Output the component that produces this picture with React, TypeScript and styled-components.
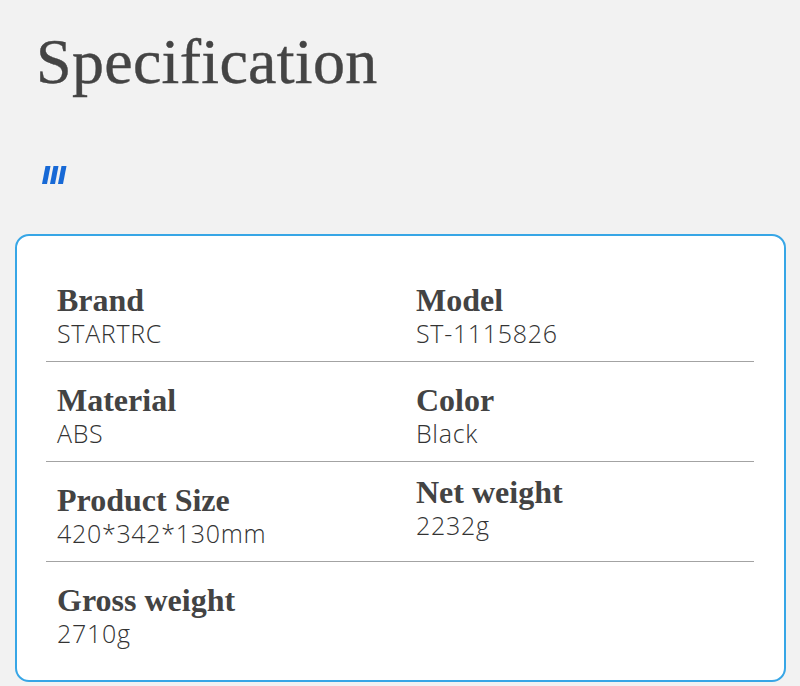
import React from "react";
import styled, { createGlobalStyle } from "styled-components";

const Global = createGlobalStyle`
  html, body { margin: 0; padding: 0; background: #f2f2f2; }
  body { width: 800px; min-height: 686px; overflow: hidden; }
`;

const Page = styled.div`
  width: 800px;
  height: 686px;
  background: #f2f2f2;
  padding-top: 30px;
  box-sizing: border-box;
`;

const Title = styled.h1`
  margin: 0 0 0 36px;
  font-family: "Liberation Serif", serif;
  font-weight: 400;
  font-size: 64px;
  line-height: 64px;
  color: #444444;
  letter-spacing: 0.3px;
  -webkit-text-stroke: 0.4px #444444;
`;

const Mark = styled.svg`
  display: block;
  margin: 72px 0 0 42px;
`;

const Card = styled.div`
  margin: 50px 14px 0 15px;
  height: 448px;
  box-sizing: border-box;
  background: #ffffff;
  border: 2px solid #37a6e6;
  border-radius: 14px;
  padding: 26px 30px 0 29px;
`;

const Row = styled.div<{ $last?: boolean }>`
  display: grid;
  grid-template-columns: 359px 1fr;
  padding-left: 11px;
  height: ${(p) => (p.$last ? "118px" : "99px")};
  border-bottom: ${(p) => (p.$last ? "none" : "1px solid #a3a3a3")};
`;

const Cell = styled.div<{ $raise?: number }>`
  padding-top: ${(p) => 23 - (p.$raise ?? 0)}px;
`;

const Label = styled.div`
  font-family: "Liberation Serif", serif;
  font-weight: 700;
  font-size: 32px;
  line-height: 30px;
  color: #434343;
`;

const Value = styled.div`
  margin-top: 3px;
  font-family: "Open Sans", sans-serif;
  font-weight: 300;
  font-size: 25px;
  letter-spacing: 0.7px;
  line-height: 30px;
  color: #333333;
`;

type Item = { label: string; value: string; raise?: number };

const rows: Item[][] = [
  [
    { label: "Brand", value: "STARTRC" },
    { label: "Model", value: "ST-1115826" },
  ],
  [
    { label: "Material", value: "ABS" },
    { label: "Color", value: "Black" },
  ],
  [
    { label: "Product Size", value: "420*342*130mm" },
    { label: "Net weight", value: "2232g", raise: 8 },
  ],
  [{ label: "Gross weight", value: "2710g" }],
];

export default function App() {
  return (
    <Page>
      <Global />
      <Title>Specification</Title>
      <Mark width="28" height="18" viewBox="0 0 28 18">
        <g fill="#1769d6">
          <polygon points="3.5,0 8.5,0 5,18 0,18" />
          <polygon points="11.5,0 16.5,0 13,18 8,18" />
          <polygon points="19.5,0 24.5,0 21,18 16,18" />
        </g>
      </Mark>
      <Card>
        {rows.map((r, i) => (
          <Row key={i} $last={i === rows.length - 1}>
            {r.map((c) => (
              <Cell key={c.label} $raise={c.raise}>
                <Label>{c.label}</Label>
                <Value>{c.value}</Value>
              </Cell>
            ))}
          </Row>
        ))}
      </Card>
    </Page>
  );
}
